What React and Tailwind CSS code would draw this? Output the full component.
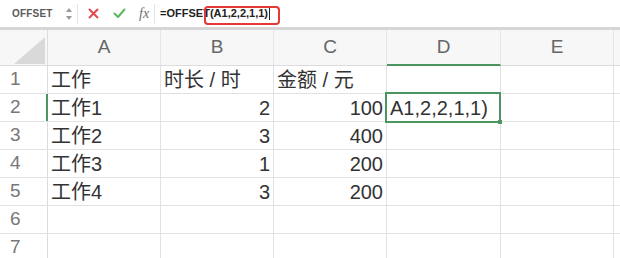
import React from 'react';

const COLS = [
  { key: 'A', w: 'w-[113px]' },
  { key: 'B', w: 'w-[113px]' },
  { key: 'C', w: 'w-[113px]' },
  { key: 'D', w: 'w-[114px]' },
  { key: 'E', w: 'w-[113px]' },
];

// 表格数据：文本左对齐，数字右对齐
const ROWS = [
  ['工作', '时长 / 时', '金额 / 元', '', ''],
  ['工作1', 2, 100, 'A1,2,2,1,1)', ''],
  ['工作2', 3, 400, '', ''],
  ['工作3', 1, 200, '', ''],
  ['工作4', 3, 200, '', ''],
  ['', '', '', '', ''],
  ['', '', '', '', ''],
];

const FormulaBar = () => (
  <div className="relative flex h-[27px] items-center border-b-[3px] border-[#d6d6d6] bg-white box-content">
    <span className="ml-[12px] w-[44px] text-[10px] font-bold text-[#5a5a5a] tracking-[0.2px]">OFFSET</span>
    {/* 上下箭头 */}
    <svg className="ml-[10px]" width="6" height="14" viewBox="0 0 6 14">
      <path d="M0 5 L3 1 L6 5 Z" fill="#9a9a9a" />
      <path d="M0 9 L3 13 L6 9 Z" fill="#9a9a9a" />
    </svg>
    <span className="ml-[5px] h-[20px] w-px bg-[#e2e2e2]" />
    {/* 取消 */}
    <svg className="ml-[10px]" width="11" height="11" viewBox="0 0 11 11">
      <path d="M1.5 1.5 L9.5 9.5 M9.5 1.5 L1.5 9.5" stroke="#e5484d" strokeWidth="2" strokeLinecap="round" />
    </svg>
    {/* 确认 */}
    <svg className="ml-[14px]" width="13" height="11" viewBox="0 0 13 11">
      <path d="M1.5 5.5 L5 9 L11.5 1.5" stroke="#5cb85c" strokeWidth="2" fill="none" strokeLinecap="round" strokeLinejoin="round" />
    </svg>
    <span className="ml-[13px] text-[14px] italic text-[#707070] font-['Liberation_Serif',serif]">fx</span>
    <span className="ml-[5px] h-[20px] w-px bg-[#e2e2e2]" />
    <span className="ml-[5px] text-[11px] font-bold text-[#222] leading-none">=OFFSET(A1,2,2,1,1)</span>
    <span className="ml-[1px] h-[13px] w-px bg-[#222]" />
    {/* 红色标注框 */}
    <div className="absolute left-[204px] top-[6px] h-[19px] w-[76px] rounded-[4px] border-2 border-[#e53935]" />
  </div>
);

const App = () => {
  return (
    <div className="relative h-[258px] w-[620px] overflow-hidden bg-white font-['Liberation_Sans','Noto_Sans_CJK_SC',sans-serif]">
      <FormulaBar />

      {/* 列标题 */}
      <div className="flex h-[36px] bg-[#f7f7f7] border-b border-[#dcdcdc]">
        <div className="relative w-[48px] shrink-0 border-r border-[#dcdcdc]">
          <svg className="absolute left-[14px] top-[7px]" width="31" height="27" viewBox="0 0 31 27">
            <path d="M0 27 L31 27 L31 0 Z" fill="#d9d9d9" />
          </svg>
        </div>
        {COLS.map((c) => (
          <div
            key={c.key}
            className={`${c.w} shrink-0 flex items-center justify-center border-r border-[#e6e6e6] text-[19px] text-[#666] ${c.key === 'D' ? 'border-b-2 border-b-[#4a9560] -mb-px' : ''}`}
          >
            {c.key}
          </div>
        ))}
        <div className="flex-1" />
      </div>

      {/* 数据行 */}
      {ROWS.map((row, ri) => (
        <div key={ri} className="flex h-[28px] border-b border-[#e1e1e1]">
          <div
            className={`w-[48px] shrink-0 flex items-center pl-[10px] text-[19px] text-[#777] border-r ${ri === 1 ? 'border-r-2 border-r-[#4a9560]' : 'border-[#dcdcdc]'}`}
          >
            {ri + 1}
          </div>
          {row.map((v, ci) => (
            <div
              key={ci}
              className={`${COLS[ci].w} shrink-0 flex items-center border-r border-[#e1e1e1] text-[20px] text-[#333] whitespace-nowrap overflow-visible ${typeof v === 'number' ? 'justify-end pr-[3px]' : 'pl-[3px]'}`}
            >
              {v}
            </div>
          ))}
          <div className="flex-1" />
        </div>
      ))}

      {/* 选中单元格 D2 */}
      <div className="absolute left-[385px] top-[92px] h-[31px] w-[116px] border-2 border-[#4a9560]">
        <div className="absolute -right-[3px] -bottom-[3px] h-[4px] w-[4px] bg-[#4a9560]" />
      </div>
    </div>
  );
};

export default App;
